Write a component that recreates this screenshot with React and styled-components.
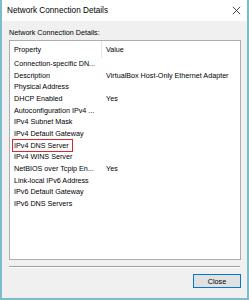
import React from "react";
import styled, { createGlobalStyle } from "styled-components";

const Global = createGlobalStyle`
  html, body {
    margin: 0;
    padding: 0;
    background: #fff;
  }
  * {
    box-sizing: border-box;
  }
`;

const Window = styled.div`
  width: 249px;
  height: 300px;
  display: flex;
  flex-direction: column;
  border-left: 2px solid #7dbccb;
  border-right: 2px solid #7dbccb;
  border-bottom: 2px solid #7dbccb;
  font-family: "Liberation Sans", Arial, sans-serif;
  color: #000;
  overflow: hidden;
`;

const TitleBar = styled.div`
  height: 21px;
  flex: none;
  background: #fff;
  display: flex;
  align-items: center;
  justify-content: space-between;
  padding: 0 6px 0 5px;
  font-size: 8.2px;
`;

const Body = styled.div`
  flex: 1;
  background: #f0f0f0;
  display: flex;
  flex-direction: column;
  padding: 7px 6px 0 7px;
`;

const Label = styled.div`
  font-size: 7.2px;
  line-height: 10px;
  height: 10px;
`;

const ListBox = styled.div`
  margin-top: 2px;
  width: 232px;
  height: 220px;
  background: #fff;
  border: 1px solid #abadb3;
  font-size: 7.2px;
`;

const Grid = styled.div`
  display: grid;
  grid-template-columns: 92px 1fr;
  align-items: center;
  height: ${(p) => p.$h}px;
`;

const HeadCell = styled.div`
  height: 100%;
  display: flex;
  align-items: center;
  padding-left: 4px;
  border-right: ${(p) => (p.$divider ? "1px solid #e5e5e5" : "none")};
`;

const Cell = styled.div`
  padding-left: 4px;
  line-height: 11.67px;
  white-space: nowrap;
`;

const Highlight = styled.span`
  position: relative;
  display: inline-block;
  &::after {
    content: "";
    position: absolute;
    left: -2px;
    right: -4px;
    top: -1px;
    bottom: -1px;
    border: 1.4px solid #e2232b;
  }
`;

const Separator = styled.div`
  margin-top: 6px;
  width: 231px;
  height: 1px;
  background: #a0a0a0;
  border-bottom: 1px solid #fff;
  box-sizing: content-box;
`;

const Footer = styled.div`
  display: flex;
  justify-content: flex-end;
  margin-top: 6px;
  width: 232px;
`;

const Button = styled.button`
  width: 48px;
  height: 14px;
  padding: 0;
  background: #e1e1e1;
  border: 1.5px solid #0078d7;
  font-family: "Liberation Sans", Arial, sans-serif;
  font-size: 7.2px;
  color: #000;
`;

const rows = [
  ["Connection-specific DN...", ""],
  ["Description", "VirtualBox Host-Only Ethernet Adapter"],
  ["Physical Address", ""],
  ["DHCP Enabled", "Yes"],
  ["Autoconfiguration IPv4 ...", ""],
  ["IPv4 Subnet Mask", ""],
  ["IPv4 Default Gateway", ""],
  ["IPv4 DNS Server", "", true],
  ["IPv4 WINS Server", ""],
  ["NetBIOS over Tcpip En...", "Yes"],
  ["Link-local IPv6 Address", ""],
  ["IPv6 Default Gateway", ""],
  ["IPv6 DNS Servers", ""],
];

function CloseIcon() {
  return (
    <svg width="9" height="9" viewBox="0 0 9 9">
      <path d="M0.8 0.8 L8.2 8.2 M8.2 0.8 L0.8 8.2" stroke="#333" strokeWidth="0.9" />
    </svg>
  );
}

export default function App() {
  return (
    <>
      <Global />
      <Window>
        <TitleBar>
          <span>Network Connection Details</span>
          <CloseIcon />
        </TitleBar>
        <Body>
          <Label>Network Connection Details:</Label>
          <ListBox>
            <Grid $h={17}>
              <HeadCell $divider>Property</HeadCell>
              <HeadCell>Value</HeadCell>
            </Grid>
            {rows.map(([prop, value, mark], i) => (
              <Grid $h={11.67} key={i}>
                <Cell>{mark ? <Highlight>{prop}</Highlight> : prop}</Cell>
                <Cell>{value}</Cell>
              </Grid>
            ))}
          </ListBox>
          <Separator />
          <Footer>
            <Button>Close</Button>
          </Footer>
        </Body>
      </Window>
    </>
  );
}
